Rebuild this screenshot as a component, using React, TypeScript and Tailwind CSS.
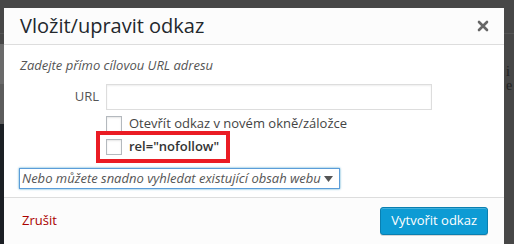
import React from 'react'

function Checkbox() {
  return <span className="w-[16px] h-[16px] border border-[#b4b9be] bg-white shadow-[inset_0_1px_2px_rgba(0,0,0,0.1)] shrink-0" />
}

export default function App() {
  return (
    <main className="w-[514px] h-[244px] bg-[#474747] relative overflow-hidden font-['Open_Sans',sans-serif]">
      {/* page behind the overlay */}
      <div className="absolute left-0 top-[33px] w-full h-px bg-[#555]" />
      <div className="absolute left-0 top-[44px] w-[4px] h-[40px] bg-[#6a6a6a]" />
      <div className="absolute left-0 top-[84px] w-[4px] h-[40px] bg-[#5c5c5c]" />
      <div className="absolute left-0 top-[124px] w-[4px] h-[120px] bg-[#1b1f24]" />
      <div className="absolute left-[506px] top-[65px] w-[8px] flex flex-col gap-[1px] font-['Liberation_Serif',serif] text-[14px] leading-[13px] text-[#222]">
        <span>i</span>
        <span>e</span>
      </div>

      <div className="relative ml-[4px] mt-[8px] w-[500px] bg-white flex flex-col">
        <header className="h-[37px] bg-[#fcfcfc] border-b border-[#dddddd] flex items-center justify-between pl-[16px] pr-[15px]">
          <h1 className="text-[20px] font-medium text-[#23282d]">Vložit/upravit odkaz</h1>
          <svg width="12" height="12" viewBox="0 0 12 12">
            <path d="M2 2 L10 10 M10 2 L2 10" stroke="#666" strokeWidth="2.6" strokeLinecap="round" />
          </svg>
        </header>

        <section className="h-[152px] pl-[16px] pt-[11px] flex flex-col">
          <p className="italic text-[13px] text-[#555] leading-[18px]">Zadejte přímo cílovou URL adresu</p>
          <div className="flex items-center mt-[10px]">
            <label className="w-[86px] text-right pr-[7px] text-[13px] text-[#555]">URL</label>
            <div className="w-[326px] h-[26px] border border-[#ddd] bg-white shadow-[inset_0_1px_2px_rgba(0,0,0,0.07)]" />
          </div>
          <div className="flex items-center gap-[7px] ml-[86px] mt-[6px] h-[16px]">
            <Checkbox />
            <span className="text-[13px] text-[#444]">Otevřít odkaz v novém okně/záložce</span>
          </div>
          <div className="ml-[76px] -mt-[1px] w-[134px] h-[32px] border-[4px] border-[#ea1c24] flex items-center gap-[7px] pl-[6px]">
            <Checkbox />
            <span className="text-[13px] font-semibold text-[#333]">rel="nofollow"</span>
          </div>
          <div className="mt-[5px] -ml-[1px] w-[321px] h-[21px] border border-[#5b9dd9] shadow-[0_0_2px_rgba(30,140,190,0.8)] flex items-center justify-between pl-[2px] pr-[6px]">
            <span className="italic text-[13px] text-[#555]">Nebo můžete snadno vyhledat existující obsah webu</span>
            <svg width="9" height="6" viewBox="0 0 9 6"><path d="M0 0 H9 L4.5 6 Z" fill="#555" /></svg>
          </div>
        </section>

        <footer className="h-[47px] bg-[#fcfcfc] border-t border-[#dddddd] flex items-center justify-between pl-[18px] pr-[16px]">
          <span className="text-[13px] text-[#a00]">Zrušit</span>
          <button className="h-[28px] px-[10px] rounded-[3px] bg-[#0d9bd4] border border-[#0a7fb0] shadow-[inset_0_1px_0_rgba(120,200,230,0.5),0_1px_0_rgba(0,0,0,0.15)] text-white text-[13px] font-['Open_Sans',sans-serif]">
            Vytvořit odkaz
          </button>
        </footer>
      </div>
    </main>
  )
}
